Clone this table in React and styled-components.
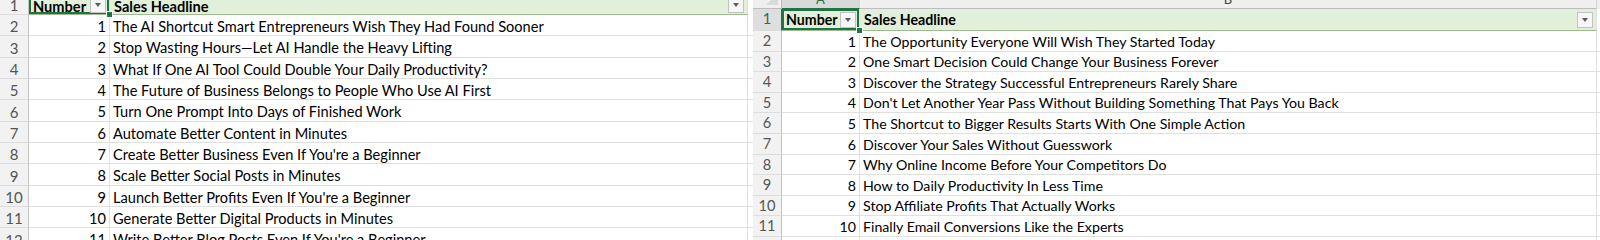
import React from 'react';
import styled, { createGlobalStyle } from 'styled-components';

const GlobalStyle = createGlobalStyle`
  html, body {
    margin: 0;
    padding: 0;
    background: #fff;
  }
  body {
    font-family: Lato, "Liberation Sans", sans-serif;
    color: #000;
  }
`;

const Screen = styled.div`
  display: flex;
  width: 1600px;
  height: 240px;
  overflow: hidden;
  background: #fff;
`;

const Pane = styled.div`
  flex: ${p => (p.$width ? 'none' : '1')};
  width: ${p => (p.$width ? `${p.$width}px` : 'auto')};
  height: 240px;
  overflow: hidden;
  background: #fff;
`;

const Sheet = styled.div`
  margin-top: ${p => p.$shift}px;
  font-size: ${p => p.$font}px;
  line-height: 1.2;
`;

const Row = styled.div`
  display: grid;
  grid-template-columns: ${p => p.$cols};
  height: ${p => p.$h}px;
`;

const ColHead = styled.div`
  display: flex;
  align-items: flex-end;
  justify-content: center;
  background: ${p => (p.$active ? '#d9d9d9' : '#efefef')};
  color: ${p => (p.$active ? '#217346' : '#444')};
  border-right: 1px solid #d4d4d4;
  border-bottom: 1px solid ${p => (p.$active ? '#217346' : '#bdbdbd')};
  font-size: 13px;
  line-height: 1;
  padding-bottom: 2px;
  box-sizing: border-box;
`;

const Corner = styled.div`
  position: relative;
  background: #efefef;
  border-right: 1px solid #bdbdbd;
  border-bottom: 1px solid #bdbdbd;
  box-sizing: border-box;

  &::after {
    content: '';
    position: absolute;
    right: 3px;
    bottom: 3px;
    border-left: 12px solid transparent;
    border-bottom: 12px solid #dadada;
  }
`;

const RowHead = styled.div`
  display: flex;
  align-items: flex-end;
  justify-content: center;
  padding-bottom: ${p => p.$pb}px;
  background: ${p => (p.$active ? '#dedede' : '#f2f2f2')};
  color: ${p => (p.$active ? '#217346' : '#555')};
  border-right: 1px solid ${p => (p.$active ? '#217346' : '#c4c4c4')};
  border-bottom: 1px solid #dcdcdc;
  box-sizing: border-box;
  font-size: 1.03em;
`;

const Cell = styled.div`
  position: relative;
  display: flex;
  align-items: flex-end;
  justify-content: ${p => (p.$num ? 'flex-end' : 'flex-start')};
  padding: 0 3px ${p => p.$pb}px 3px;
  border-right: 1px solid #e0e0e0;
  border-bottom: 1px solid #e0e0e0;
  box-sizing: border-box;
  white-space: nowrap;
  min-width: 0;
`;

const HeadCell = styled(Cell)`
  align-items: center;
  background: #e2efda;
  font-weight: 700;
  border-bottom: 1px solid #9dbb8f;
  padding-left: 4px;
  padding-right: 3px;
  padding-bottom: 0;
  box-shadow: ${p => (p.$selected ? 'inset 0 0 0 2px #217346' : 'none')};
`;

const HeadText = styled.span`
  align-self: ${p => (p.$bottom ? 'flex-end' : 'center')};
  margin-bottom: ${p => (p.$bottom ? '-1px' : '0')};
`;

const Handle = styled.span`
  position: absolute;
  right: -4px;
  bottom: -4px;
  width: 5px;
  height: 5px;
  background: #217346;
  border: 1px solid #fff;
  z-index: 2;
`;

const FilterButton = styled.span`
  flex: none;
  margin-left: auto;
  width: 14px;
  height: 14px;
  border: 1px solid #c2c2c2;
  background: #f7f7f7;
  display: flex;
  align-items: center;
  justify-content: center;
  align-self: ${p => (p.$bottom ? 'flex-end' : 'center')};
  margin-bottom: ${p => (p.$bottom ? '1px' : '0')};

  &::after {
    content: '';
    border-left: 3px solid transparent;
    border-right: 3px solid transparent;
    border-top: 4px solid #5c5c5c;
  }
`;

const Blank = styled.div`
  border-bottom: 1px solid ${p => (p.$line ? '#e0e0e0' : 'transparent')};
  background: ${p => p.$bg || '#fff'};
`;

const leftRows = [
  'The AI Shortcut Smart Entrepreneurs Wish They Had Found Sooner',
  'Stop Wasting Hours\u2014Let AI Handle the Heavy Lifting',
  'What If One AI Tool Could Double Your Daily Productivity?',
  'The Future of Business Belongs to People Who Use AI First',
  'Turn One Prompt Into Days of Finished Work',
  'Automate Better Content in Minutes',
  "Create Better Business Even If You're a Beginner",
  'Scale Better Social Posts in Minutes',
  "Launch Better Profits Even If You're a Beginner",
  'Generate Better Digital Products in Minutes',
  "Write Better Blog Posts Even If You're a Beginner",
];

const rightRows = [
  'The Opportunity Everyone Will Wish They Started Today',
  'One Smart Decision Could Change Your Business Forever',
  'Discover the Strategy Successful Entrepreneurs Rarely Share',
  "Don't Let Another Year Pass Without Building Something That Pays You Back",
  'The Shortcut to Bigger Results Starts With One Simple Action',
  'Discover Your Sales Without Guesswork',
  'Why Online Income Before Your Competitors Do',
  'How to Daily Productivity In Less Time',
  'Stop Affiliate Profits That Actually Works',
  'Finally Email Conversions Like the Experts',
  '',
];

function Table({ rows, cols, h, headH, activeRow, clipped, pb }) {
  return (
    <>
      <Row $cols={cols} $h={headH}>
        <RowHead $active={activeRow} $pb={clipped ? 0 : 2}>1</RowHead>
        <HeadCell $selected>
          <HeadText $bottom={clipped}>Number</HeadText>
          <FilterButton $bottom={clipped} />
          <Handle />
        </HeadCell>
        <HeadCell>
          <HeadText $bottom={clipped}>Sales Headline</HeadText>
          <FilterButton $bottom={clipped} />
        </HeadCell>
        <Blank />
      </Row>
      {rows.map((text, i) => (
        <Row key={i} $cols={cols} $h={h}>
          <RowHead $pb={pb}>{i + 2}</RowHead>
          <Cell $num $pb={pb}>{text ? i + 1 : ''}</Cell>
          <Cell $pb={pb}>{text}</Cell>
          <Blank $line />
        </Row>
      ))}
    </>
  );
}

export default function App() {
  const leftCols = '29px 81px 638px 1fr';
  const rightCols = '29px 78px 737px 1fr';
  return (
    <>
      <GlobalStyle />
      <Screen>
        <Pane $width={753}>
          <Sheet $shift={-6.35} $font={14.6}>
            <Table rows={leftRows} cols={leftCols} h={21.35} headH={21.35} clipped pb={0} />
          </Sheet>
        </Pane>
        <Pane>
          <Sheet $shift={-11} $font={14.2}>
            <Row $cols={rightCols} $h={20}>
              <Corner />
              <ColHead $active>A</ColHead>
              <ColHead>B</ColHead>
              <Blank $bg="#efefef" />
            </Row>
            <Table rows={rightRows} cols={rightCols} h={20.6} headH={22} activeRow pb={1} />
          </Sheet>
        </Pane>
      </Screen>
    </>
  );
}
